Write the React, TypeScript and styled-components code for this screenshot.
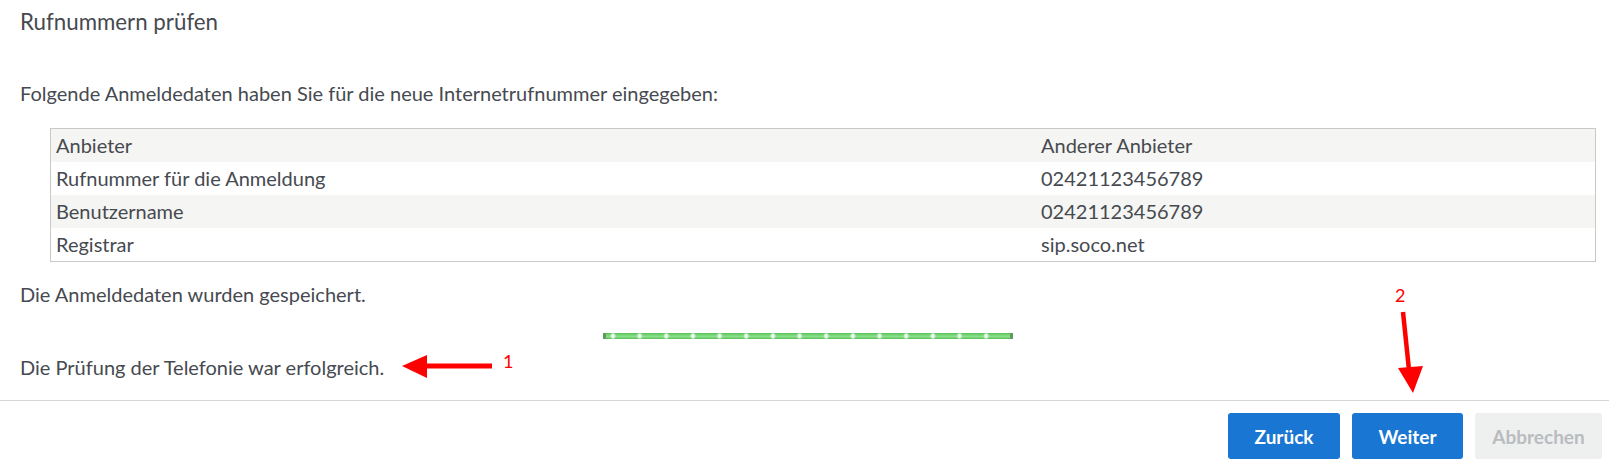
import React from "react";
import styled, { createGlobalStyle } from "styled-components";

const Global = createGlobalStyle`
  html, body { margin: 0; padding: 0; background: #fff; }
  body { font-family: Lato, "Liberation Sans", sans-serif; color: #464a50; }
`;

const Page = styled.div`
  position: relative;
  width: 1609px;
  height: 470px;
  display: flex;
  flex-direction: column;
  background: #fff;
`;

const Content = styled.div`
  display: flex;
  flex-direction: column;
  padding: 10px 13px 0 20px;
`;

const Title = styled.h1`
  margin: 0;
  font-size: 22.3px;
  font-weight: 400;
  line-height: 24px;
  color: #464a50;
`;

const Text = styled.p<{ $top: number }>`
  margin: ${(p) => p.$top}px 0 0;
  font-size: 20px;
  line-height: 24px;
`;

const Table = styled.div`
  margin: 23px 0 0 30px;
  border: 1px solid #c9c9c5;
  display: flex;
  flex-direction: column;
`;

const Row = styled.div<{ $shade: boolean }>`
  display: grid;
  grid-template-columns: 985px 1fr;
  height: 33px;
  align-items: center;
  background: ${(p) => (p.$shade ? "#f5f5f3" : "#fff")};
  font-size: 20px;
  line-height: 33px;
`;

const Cell = styled.div`
  padding-left: 5px;
  white-space: nowrap;
`;

const BarWrap = styled.div`
  display: flex;
  justify-content: center;
  margin-top: 27px;
`;

const Bar = styled.div`
  width: 410px;
  height: 6px;
  border-left: 3px solid #5f9a5f;
  border-right: 3px solid #5f9a5f;
  box-sizing: border-box;
  background:
    radial-gradient(ellipse 3px 3.5px at 7px 50%, rgba(245, 253, 245, 1) 0%, rgba(225, 246, 225, 0.95) 55%, rgba(220, 245, 220, 0) 100%) 0 0 / 26.67px 6px repeat-x,
    linear-gradient(180deg, #5cbf5c 0%, #7ddc7d 45%, #8ee48e 55%, #5cbf5c 100%);
`;

const Footer = styled.div`
  margin-top: 21px;
  border-top: 1px solid #d6d6d6;
  padding: 12px 7px 0 0;
  display: flex;
  justify-content: flex-end;
  gap: 12px;
`;

const Button = styled.button<{ $w: number; $disabled?: boolean }>`
  width: ${(p) => p.$w}px;
  height: 46px;
  border: none;
  border-radius: 3px;
  font-family: Lato, "Liberation Sans", sans-serif;
  font-weight: 700;
  font-size: 19px;
  background: ${(p) => (p.$disabled ? "#eef0f0" : "#1976d2")};
  color: ${(p) => (p.$disabled ? "#b9bcbf" : "#fff")};
  padding: 0;
  cursor: pointer;
`;

const Overlay = styled.svg`
  position: absolute;
  left: 0;
  top: 0;
  pointer-events: none;
`;

const Mark = styled.text`
  font-family: Lato, "Liberation Sans", sans-serif;
  font-size: 18px;
  fill: #f00;
`;

const rows: [string, string][] = [
  ["Anbieter", "Anderer Anbieter"],
  ["Rufnummer für die Anmeldung", "02421123456789"],
  ["Benutzername", "02421123456789"],
  ["Registrar", "sip.soco.net"],
];

export default function App() {
  return (
    <Page>
      <Global />
      <Content>
        <Title>Rufnummern prüfen</Title>
        <Text $top={47}>Folgende Anmeldedaten haben Sie für die neue Internetrufnummer eingegeben:</Text>
        <Table>
          {rows.map(([a, b], i) => (
            <Row key={a} $shade={i % 2 === 0}>
              <Cell>{a}</Cell>
              <Cell>{b}</Cell>
            </Row>
          ))}
        </Table>
        <Text $top={20}>Die Anmeldedaten wurden gespeichert.</Text>
        <BarWrap>
          <Bar />
        </BarWrap>
        <Text $top={16}>Die Prüfung der Telefonie war erfolgreich.</Text>
      </Content>
      <Footer>
        <Button $w={112}>Zurück</Button>
        <Button $w={111}>Weiter</Button>
        <Button $w={127} $disabled>Abbrechen</Button>
      </Footer>
      <Overlay width="1609" height="470" viewBox="0 0 1609 470">
        <line x1="492" y1="366" x2="424" y2="366" stroke="#f00" strokeWidth="5" />
        <polygon points="402,366 427,355 427,378" fill="#f00" />
        <Mark x="503" y="368">1</Mark>
        <line x1="1403" y1="312" x2="1409" y2="370" stroke="#f00" strokeWidth="4.5" />
        <polygon points="1398,368 1423,366 1413,393" fill="#f00" />
        <Mark x="1395" y="302">2</Mark>
      </Overlay>
    </Page>
  );
}
